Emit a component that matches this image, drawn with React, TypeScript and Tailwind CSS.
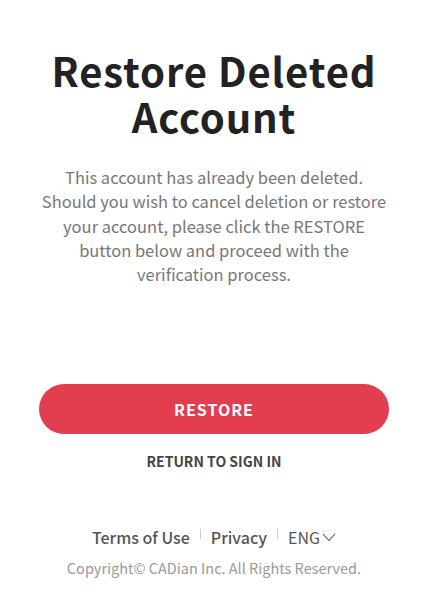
const font = { fontFamily: '"Noto Sans CJK KR", "Noto Sans", sans-serif' };

export default function App() {
  return (
    <main
      className="flex min-h-[604px] w-full flex-col items-center bg-white px-[39px]"
      style={font}
    >
      <h1 className="mt-[47px] text-center text-[40px] font-bold leading-[46px] tracking-[0.9px] text-[#222222]">
        Restore Deleted
        <br />
        Account
      </h1>

      <p className="mt-[26px] w-[400px] text-center text-[16.5px] leading-[24.25px] text-[#777777]">
        This account has already been deleted.
        <br />
        Should you wish to cancel deletion or restore
        <br />
        your account, please click the RESTORE
        <br />
        button below and proceed with the
        <br />
        verification process.
      </p>

      <button className="mt-[98px] flex h-[50px] w-full items-center justify-center rounded-full bg-[#e33d50] text-[16px] font-bold tracking-[1px] text-white">
        RESTORE
      </button>

      <button className="mt-[17px] text-[14px] font-bold text-[#444444]">
        RETURN TO SIGN IN
      </button>

      <div className="mt-[53px] flex items-center text-[16px] font-medium text-[#555555]">
        <a>Terms of Use</a>
        <span className="mx-[10px] mb-[6px] h-[10px] w-px bg-[#cccccc]" />
        <a>Privacy</a>
        <span className="mx-[10px] mb-[6px] h-[10px] w-px bg-[#cccccc]" />
        <span className="flex items-center gap-[2px] font-normal">
          ENG
          <svg width="14" height="10" viewBox="0 0 14 10" fill="none">
            <path d="M1 2l6 6.5 6-6.5" stroke="#555555" strokeWidth="1.1" />
          </svg>
        </span>
      </div>

      <p className="mt-[8px] text-[14.5px] text-[#999999]">
        Copyright© CADian Inc. All Rights Reserved.
      </p>
    </main>
  );
}
